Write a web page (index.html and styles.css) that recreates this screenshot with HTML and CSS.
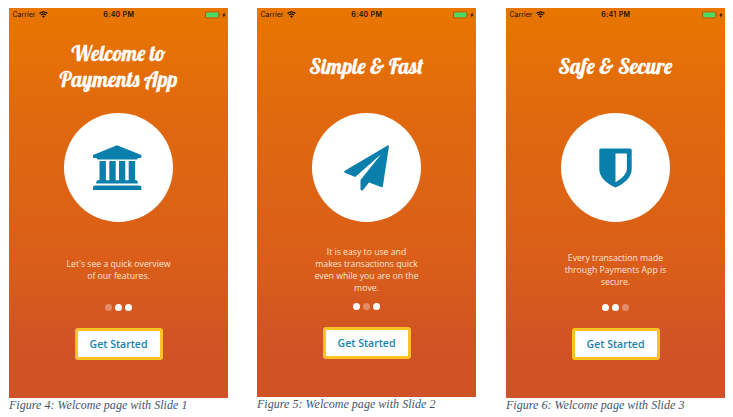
FILE: index.html
```html
<!DOCTYPE html>
<html lang="en">
<head>
<meta charset="utf-8">
<title>Welcome pages</title>
<link rel="stylesheet" href="styles.css">
</head>
<body>
<svg width="0" height="0" class="defs" aria-hidden="true">
  <symbol id="wifi" viewBox="0 0 16 12"><path d="M1 4.3a10 10 0 0 1 14 0M3.6 7a6.3 6.3 0 0 1 8.800 0" fill="none" stroke="#1c1206" stroke-width="2.3"/><path d="M8 12 5.400 9.200a3.800 3.800 0 0 1 5.200 0z" fill="#1c1206"/></symbol>
  <symbol id="battery" viewBox="0 0 22 8"><rect x=".5" y=".9" width="13.3" height="6" rx="1.4" fill="none" stroke="#8e5a18" stroke-width=".8"/><rect x="1.2" y="1.6" width="11.9" height="4.6" rx=".7" fill="#4cd964"/><path d="M14.7 3v2q.8-.3.8-1t-.8-1z" fill="#8e5a18"/><path d="M19.600 1.200 17.300 4.400h1.400l-.5 2.500 2.400-3.400h-1.400z" fill="#1c1206"/></symbol>
</svg>
<main class="figures">
  <figure class="figure">
    <section class="phone">
      <header class="status"><span class="carrier">Carrier</span><svg class="wifi"><use href="#wifi"/></svg><time class="time">6:40 PM</time><svg class="battery"><use href="#battery"/></svg></header>
      <h1 class="title"><svg viewBox="0 0 219 70"><text x="62.500" y="39.500" textLength="94" lengthAdjust="spacingAndGlyphs">Welcome to</text><text x="50.500" y="65.500" textLength="118" lengthAdjust="spacingAndGlyphs">Payments App</text></svg></h1>
      <div class="disc"><svg viewBox="0 0 109 109"><g fill="#0b7fab"><path d="M53 32.200 77.300 42v3H74q-.4 1.500-1.700 1.500H34.200q-1.300 0-1.700-1.500H29v-3z"/><path d="M35.500 48.100h6.400v19.200h3.400V48.100h6.400v19.200h3.300V48.100h6.300v19.200h3.400V48.100h6.400v19.200h1.300q1.500.5 1.500 3.300H32.100q0-2.800 1.500-3.300h1.900zM30.700 72.400h45q1.700.6 1.700 2v2.600H29v-2.600q0-1.400 1.700-2z"/></g></svg></div>
      <p class="copy">Let's see a quick overview<br>of our features.</p>
      <div class="dots"><i class="dot current"></i><i class="dot"></i><i class="dot"></i></div>
      <button class="start">Get Started</button>
    </section>
    <figcaption>Figure 4: Welcome page with Slide 1</figcaption>
  </figure>
  <figure class="figure short">
    <section class="phone">
      <header class="status"><span class="carrier">Carrier</span><svg class="wifi"><use href="#wifi"/></svg><time class="time">6:40 PM</time><svg class="battery"><use href="#battery"/></svg></header>
      <h1 class="title"><svg viewBox="0 0 219 70"><text x="52.300" y="52.500" textLength="114" lengthAdjust="spacingAndGlyphs">Simple &amp; Fast</text></svg></h1>
      <div class="disc"><svg viewBox="0 0 109 109"><path fill="#0b7fab" d="M75.600 32.400q1.500-.5 1.300 1.200l-6 39.400q-.3 1.700-1.900 1.100l-12-4.500-6 7.300q-1.600 1.400-2.500-.7V67L69.300 41 43.200 63.900l-10.400-4.200q-1.500-1 0-2z"/></svg></div>
      <p class="copy">It is easy to use and<br>makes transactions quick<br>even while you are on the<br>move.</p>
      <div class="dots"><i class="dot"></i><i class="dot current"></i><i class="dot"></i></div>
      <button class="start">Get Started</button>
    </section>
    <figcaption>Figure 5: Welcome page with Slide 2</figcaption>
  </figure>
  <figure class="figure">
    <section class="phone">
      <header class="status"><span class="carrier">Carrier</span><svg class="wifi"><use href="#wifi"/></svg><time class="time">6:41 PM</time><svg class="battery"><use href="#battery"/></svg></header>
      <h1 class="title"><svg viewBox="0 0 219 70"><text x="52.300" y="52.500" textLength="114" lengthAdjust="spacingAndGlyphs">Safe &amp; Secure</text></svg></h1>
      <div class="disc"><svg viewBox="0 0 109 109"><path fill="#0b7fab" fill-rule="evenodd" d="M39.900 35.500h29.200q1.600 0 1.600 1.600v18.700q0 11.500-16.200 18.800Q38.300 67.300 38.300 55.800V37.100q0-1.600 1.600-1.600zM54.500 40.400V69.200Q65.900 62.500 65.900 55.700V40.400z"/></svg></div>
      <p class="copy">Every transaction made<br>through Payments App is<br>secure.</p>
      <div class="dots"><i class="dot"></i><i class="dot"></i><i class="dot current"></i></div>
      <button class="start">Get Started</button>
    </section>
    <figcaption>Figure 6: Welcome page with Slide 3</figcaption>
  </figure>
</main>
</body>
</html>
```
FILE: styles.css
```css
* { box-sizing: border-box; }
body { margin: 0; background: #fff; overflow: hidden; }
.defs { display: block; }
.figures { display: grid; grid-template-columns: 248px 249px 219px; padding: 8px 0 0 9px; }
.figure { margin: 0; width: 219px; }
.phone {
  height: 390px;
  display: flex;
  flex-direction: column;
  align-items: center;
  background: linear-gradient(#e87600, #e0690f 28%, #da5e19 65%, #cf5325 88%, #cf5326);
  color: #fff;
}
.short .phone { height: 389px; }
.status {
  width: 100%;
  height: 13px;
  padding: 0 1px 0 3.5px;
  display: grid;
  grid-template-columns: 22px 9px 1fr 22px;
  column-gap: 4px;
  align-items: center;
  font: 7px/13px Inter, "Liberation Sans", sans-serif;
  color: #1c1206;
}
.wifi { width: 9px; height: 7px; }
.time { font-weight: 600; text-align: center; padding-right: 15px; white-space: nowrap; }
.battery { width: 22px; height: 8px; }
.title { margin: 0; width: 219px; height: 92px; }
.title svg { display: block; width: 219px; height: 70px; overflow: visible; }
.title text { font: 400 21px Lobster, "Liberation Serif", serif; fill: #fff; stroke: #fff; stroke-width: .3px; }
.disc { flex: none; width: 109px; height: 109px; border-radius: 50%; background: #fff; }
.disc svg { display: block; width: 109px; height: 109px; }
.copy {
  margin: 11px 0 0;
  height: 74px;
  padding-bottom: 1px;
  display: flex;
  flex-direction: column;
  justify-content: center;
  text-align: center;
  font: 8.7px/12px "Open Sans", sans-serif;
  color: #fce4d5;
  white-space: nowrap;
}
.time { letter-spacing: .3px; }
.dots { display: flex; gap: 3px; height: 7px; margin-top: -3.5px; }
.short .dots { margin-top: -4.5px; }
.dot { width: 7px; height: 7px; border-radius: 50%; background: #fff; }
.dot.current { background: #e28d68; }
.start {
  width: 88px;
  height: 32px;
  margin: 17.5px 0 0;
  padding: 0;
  border: 3.5px solid #ffc222;
  border-radius: 3px;
  background: #fff;
  color: #1781ad;
  font: 600 10.5px/24px "Open Sans", sans-serif;
}
figcaption { font: italic 12px/14px "Liberation Serif", serif; letter-spacing: .04px; color: #44546a; white-space: nowrap; }
```
